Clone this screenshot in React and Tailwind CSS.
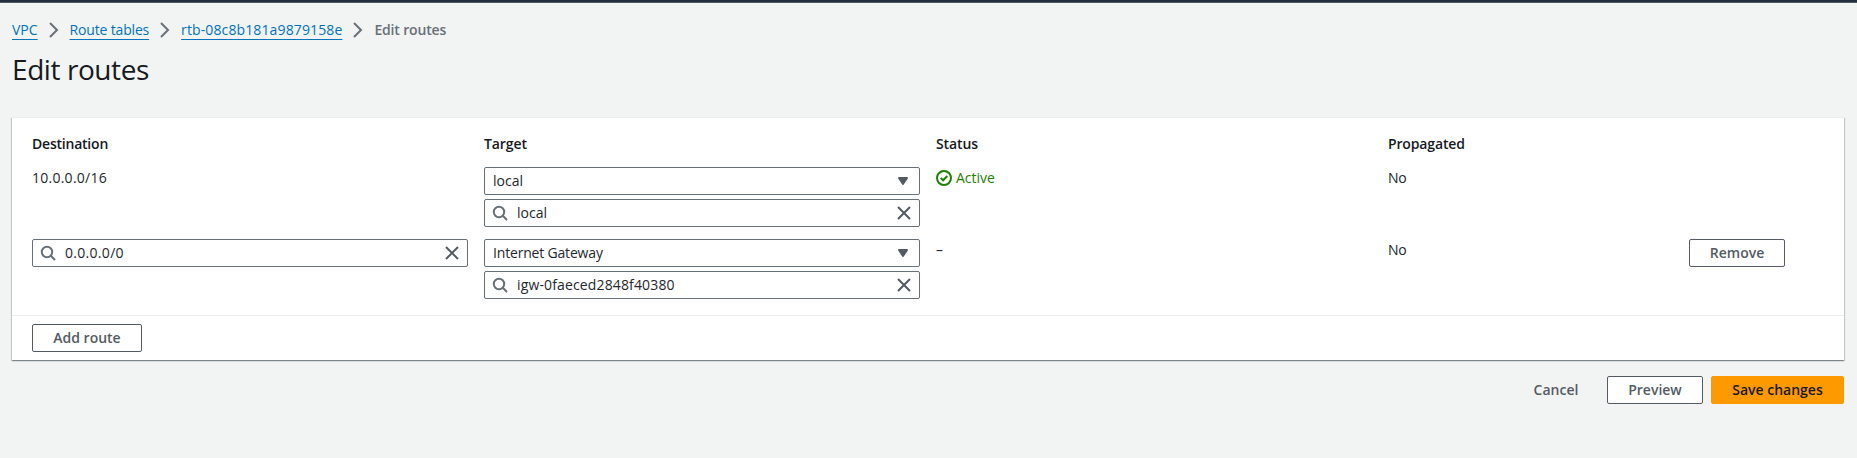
import React from "react";

function Chevron() {
  return (
    <svg className="mx-[8px] h-4 w-4 shrink-0" viewBox="0 0 16 16" fill="none" stroke="#687078" strokeWidth="2">
      <path d="M4 1 11 8 4 15" />
    </svg>
  );
}

function SearchIcon() {
  return (
    <svg className="h-4 w-4 shrink-0" viewBox="0 0 16 16" fill="none" stroke="#687078" strokeWidth="2">
      <circle cx="7" cy="7" r="5.2" />
      <path d="m10.8 10.8 4.2 4.2" />
    </svg>
  );
}

function CloseIcon() {
  return (
    <svg className="h-4 w-4 shrink-0" viewBox="0 0 16 16" fill="none" stroke="#545b64" strokeWidth="2">
      <path d="m2 2 12 12M14 2 2 14" />
    </svg>
  );
}

function CaretIcon() {
  return (
    <svg className="h-4 w-4 shrink-0" viewBox="0 0 16 16" fill="#545b64" stroke="#545b64" strokeWidth="2" strokeLinejoin="round">
      <path d="M4 5h8l-4 6z" />
    </svg>
  );
}

function CheckIcon() {
  return (
    <svg className="h-4 w-4 shrink-0" viewBox="0 0 16 16" fill="none" stroke="#1d8102" strokeWidth="2">
      <circle cx="8" cy="8" r="7" />
      <path d="m4.7 8 2.4 2.3 4.2-4.3" />
    </svg>
  );
}

function SearchInput({ children }) {
  return (
    <div className="flex h-7 items-center rounded-[2px] border border-[#687078] bg-white px-[7px]">
      <SearchIcon />
      <span className="ml-[9px] grow">{children}</span>
      <CloseIcon />
    </div>
  );
}

function Select({ children }) {
  return (
    <div className="flex h-7 items-center rounded-[2px] border border-[#687078] bg-white px-2">
      <span className="grow">{children}</span>
      <CaretIcon />
    </div>
  );
}

function Button({ children, className }) {
  return (
    <button
      className={
        "flex h-7 items-center justify-center rounded-[2px] border font-semibold " + className
      }
    >
      {children}
    </button>
  );
}

const outlined = "border-[#545b64] bg-white text-[#545b64]";
const row = "grid grid-cols-[436px_436px_436px_285px_1fr] gap-x-4 items-start";
const link = "text-[#0073bb] underline decoration-1 underline-offset-[4px]";

export default function App() {
  return (
    <div className="h-[458px] overflow-hidden bg-[#f2f3f3] font-['Open_Sans','Noto_Sans',sans-serif] text-[14px] leading-[22px] text-[#16191f]">
      <div className="h-[3px] border-b border-[#545b64] bg-[#232f3e]" />
      <main className="pt-4 pr-[13px] pl-3">
        <nav className="flex h-[22px] items-center">
          <a className={link}>VPC</a>
          <Chevron />
          <a className={link + " tracking-[-0.17px]"}>Route tables</a>
          <Chevron />
          <a className={link + " tracking-[0.12px]"}>rtb-08c8b181a9879158e</a>
          <Chevron />
          <span className="font-semibold tracking-[-0.16px] text-[#687078]">Edit routes</span>
        </nav>
        <h1 className="mt-[10px] text-[28px] leading-9 tracking-[-0.42px]">Edit routes</h1>

        <section className="mt-[30px] border-t border-[#eaeded] bg-white shadow-[0_1px_1px_0_rgba(0,28,36,0.3),1px_1px_1px_0_rgba(0,28,36,0.15),-1px_1px_1px_0_rgba(0,28,36,0.15)]">
          <div className="h-[197px] px-5 pt-[15px]">
            <div className={row + " font-semibold"}>
              <span className="tracking-[-0.22px]">Destination</span>
              <span className="tracking-[-0.1px]">Target</span>
              <span className="tracking-[-0.1px]">Status</span>
              <span className="tracking-[-0.14px]">Propagated</span>
            </div>
            <div className={row + " mt-3 text-[#24272d]"}>
              <span className="tracking-[0.25px]">10.0.0.0/16</span>
              <div className="flex flex-col gap-1">
                <Select>local</Select>
                <SearchInput>local</SearchInput>
              </div>
              <span className="flex items-center gap-1 text-[#1d8102]">
                <CheckIcon />
                Active
              </span>
              <span className="tracking-[-0.4px]">No</span>
            </div>
            <div className={row + " mt-3 text-[#24272d]"}>
              <SearchInput>
                <span className="tracking-[0.3px]">0.0.0.0/0</span>
              </SearchInput>
              <div className="flex flex-col gap-1">
                <Select>
                  <span className="tracking-[-0.18px]">Internet Gateway</span>
                </Select>
                <SearchInput>
                  <span className="tracking-[0.14px]">igw-0faeced2848f40380</span>
                </SearchInput>
              </div>
              <span>–</span>
              <span className="tracking-[-0.4px]">No</span>
              <Button className={outlined + " w-24"}>Remove</Button>
            </div>
          </div>
          <div className="h-[45px] border-t border-[#eaeded] px-5 pt-2">
            <Button className={outlined + " w-[110px]"}>Add route</Button>
          </div>
        </section>

        <div className="mt-4 flex justify-end">
          <Button className="mr-2 w-[86px] border-transparent text-[#545b64]">Cancel</Button>
          <Button className={outlined + " mr-2 w-24"}>Preview</Button>
          <Button className="w-[133px] border-[#ff9900] bg-[#ff9900] text-[#16191f]">Save changes</Button>
        </div>
      </main>
    </div>
  );
}
